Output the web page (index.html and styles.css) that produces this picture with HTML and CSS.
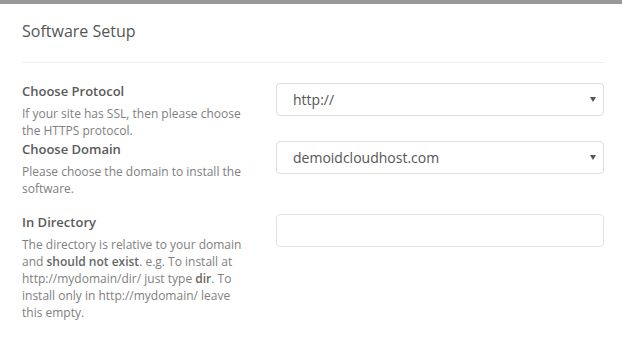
FILE: index.html
```html
<!DOCTYPE html>
<html lang="en">
<head>
  <meta charset="UTF-8">
  <title>Software Setup</title>
  <link rel="stylesheet" href="styles.css">
</head>
<body>

<div class="topbar"></div>

<section class="panel">
  <h2>Software Setup</h2>
  <hr>

  <!-- protocol -->
  <div class="row">
    <div class="info">
      <label for="proto">Choose Protocol</label>
      <p>If your site has SSL, then please choose the HTTPS protocol.</p>
    </div>
    <div class="field">
      <div class="select">
        <select id="proto">
          <option>http://</option>
          <option>http://www.</option>
          <option>https://</option>
          <option>https://www.</option>
        </select>
      </div>
    </div>
  </div>

  <!-- domain -->
  <div class="row">
    <div class="info">
      <label for="domain">Choose Domain</label>
      <p>Please choose the domain to install the software.</p>
    </div>
    <div class="field">
      <div class="select">
        <select id="domain">
          <option>demoidcloudhost.com</option>
        </select>
      </div>
    </div>
  </div>

  <!-- directory -->
  <div class="row row-dir">
    <div class="info">
      <label for="dir">In Directory</label>
      <p>The directory is relative to your domain and <b>should not exist</b>. e.g. To install at http://mydomain/dir/ just type <b>dir</b>. To install only in http://mydomain/ leave this empty.</p>
    </div>
    <div class="field">
      <input type="text" id="dir">
    </div>
  </div>
</section>

</body>
</html>
```

FILE: styles.css
```css
* { box-sizing: border-box; margin: 0; padding: 0; }
body {
  font-family: "Open Sans", Arial, sans-serif;
  background: #fff;
  color: #555;
}

/* ——— top strip ——— */
.topbar {
  height: 4px;
  margin-right: 4px;
  background: #999;
}

/* ——— panel ——— */
.panel { padding: 0 22px; }
.panel h2 {
  margin-top: 16px;
  font-size: 16px;
  line-height: 22px;
  font-weight: 400;
  color: #555;
}
.panel hr {
  border: 0;
  border-top: 1px solid #eee;
  margin: 20px 0 19px;
}

/* ——— form rows ——— */
.row {
  display: grid;
  grid-template-columns: 226px 328px;
  column-gap: 28px;
  margin-bottom: 1px;
}
.row-dir { margin-top: 16px; }

.info label {
  display: block;
  font-size: 13px;
  line-height: 18px;
  font-weight: 600;
  color: #5a5a5a;
}
.info p {
  margin-top: 5px;
  font-size: 12px;
  line-height: 17px;
  color: #808080;
}
.info p b { font-weight: 600; color: #666; }

.field { padding-top: 1px; }

/* select with small caret */
.select { position: relative; }
.select::after {
  content: "";
  position: absolute;
  right: 8px;
  top: 14px;
  border-left: 3px solid transparent;
  border-right: 3px solid transparent;
  border-top: 5px solid #555;
  pointer-events: none;
}
.select select,
.field input {
  display: block;
  width: 100%;
  height: 33px;
  border: 1px solid #ddd;
  border-radius: 4px;
  background: #fff;
  font-family: inherit;
  font-size: 14px;
  color: #555;
  padding: 0 16px;
  appearance: none;
  -webkit-appearance: none;
  outline: none;
}
.field input { border-color: #e3e3e3; }
```
